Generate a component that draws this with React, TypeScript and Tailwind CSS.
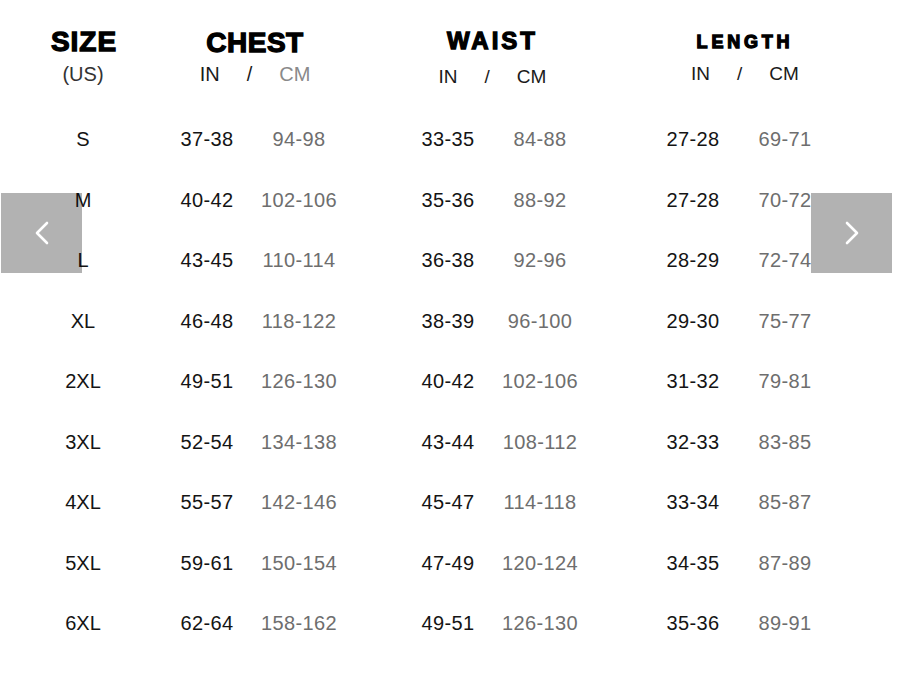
import React from 'react';

type Row = {
  size: string;
  chest: [string, string];
  waist: [string, string];
  length: [string, string];
};

const rows: Row[] = [
  { size: 'S', chest: ['37-38', '94-98'], waist: ['33-35', '84-88'], length: ['27-28', '69-71'] },
  { size: 'M', chest: ['40-42', '102-106'], waist: ['35-36', '88-92'], length: ['27-28', '70-72'] },
  { size: 'L', chest: ['43-45', '110-114'], waist: ['36-38', '92-96'], length: ['28-29', '72-74'] },
  { size: 'XL', chest: ['46-48', '118-122'], waist: ['38-39', '96-100'], length: ['29-30', '75-77'] },
  { size: '2XL', chest: ['49-51', '126-130'], waist: ['40-42', '102-106'], length: ['31-32', '79-81'] },
  { size: '3XL', chest: ['52-54', '134-138'], waist: ['43-44', '108-112'], length: ['32-33', '83-85'] },
  { size: '4XL', chest: ['55-57', '142-146'], waist: ['45-47', '114-118'], length: ['33-34', '85-87'] },
  { size: '5XL', chest: ['59-61', '150-154'], waist: ['47-49', '120-124'], length: ['34-35', '87-89'] },
  { size: '6XL', chest: ['62-64', '158-162'], waist: ['49-51', '126-130'], length: ['35-36', '89-91'] },
];

// two cells (inches / centimetres) for one measurement
function Pair({ value }: { value: [string, string] }) {
  return (
    <div className="flex gap-2 tracking-[0.4px]">
      <div className="w-[84px] text-center text-[#141414]">{value[0]}</div>
      <div className="w-[84px] text-center text-[#6e6e6e]">{value[1]}</div>
    </div>
  );
}

function Units({ cmGray }: { cmGray?: boolean }) {
  return (
    <div className="flex items-center gap-[27px] leading-none text-[#1a1a1a]">
      <span>IN</span>
      <span>/</span>
      <span className={cmGray ? 'text-[#8a8a8a]' : ''}>CM</span>
    </div>
  );
}

function Arrow({ dir }: { dir: 'left' | 'right' }) {
  return (
    <button className="flex h-[80px] w-[81px] items-center justify-center bg-black/30">
      <svg width="16" height="24" viewBox="0 0 16 24" fill="none">
        <polyline
          points={dir === 'left' ? '13,2 3,12 13,22' : '3,2 13,12 3,22'}
          stroke="white"
          strokeWidth="2.6"
          strokeLinecap="round"
          strokeLinejoin="round"
        />
      </svg>
    </button>
  );
}

export default function App() {
  const heading =
    "font-['Liberation_Sans',Arial,sans-serif] font-bold leading-none text-black [-webkit-text-stroke:1.3px_#000]";

  return (
    <div className="relative h-[684px] w-[899px] overflow-hidden bg-white font-['Liberation_Sans',Arial,sans-serif] text-[20px]">
      {/* ─── Header ─── */}
      <div className="flex h-[109px]">
        <div className="ml-[43px] flex w-[80px] flex-col items-center">
          <div className={`${heading} mt-[28px] pl-[2px] text-[28px] tracking-[1px]`}>SIZE</div>
          <div className="mt-[8px] text-[20px] leading-none text-[#333]">(US)</div>
        </div>
        <div className="ml-[42px] flex w-[176px] flex-col items-center pl-[4px]">
          <div className={`${heading} mt-[29px] text-[28px] tracking-[0.5px]`}>CHEST</div>
          <div className="mt-[7px]">
            <Units cmGray />
          </div>
        </div>
        <div className="ml-[65px] flex w-[176px] flex-col items-center pr-[3px]">
          <div className={`${heading} mt-[29px] text-[24px] tracking-[3px]`}>WAIST</div>
          <div className="mt-[14px] text-[19px]">
            <Units />
          </div>
        </div>
        <div className="ml-[69px] flex w-[176px] flex-col items-center pl-[12px]">
          <div className={`${heading} mt-[33px] text-[18px] tracking-[3.8px]`}>LENGTH</div>
          <div className="mt-[13px] text-[19px]">
            <Units />
          </div>
        </div>
      </div>

      {/* ─── Rows ─── */}
      <div className="flex flex-col leading-none">
        {rows.map((r) => (
          <div key={r.size} className="flex h-[60.5px] items-center">
            <div className="ml-[43px] w-[80px] text-center text-[#141414]">{r.size}</div>
            <div className="ml-[42px]">
              <Pair value={r.chest} />
            </div>
            <div className="ml-[65px]">
              <Pair value={r.waist} />
            </div>
            <div className="ml-[69px]">
              <Pair value={r.length} />
            </div>
          </div>
        ))}
      </div>

      {/* ─── Carousel arrows ─── */}
      <div className="absolute left-[1px] top-[193px]">
        <Arrow dir="left" />
      </div>
      <div className="absolute left-[811px] top-[193px]">
        <Arrow dir="right" />
      </div>
    </div>
  );
}
